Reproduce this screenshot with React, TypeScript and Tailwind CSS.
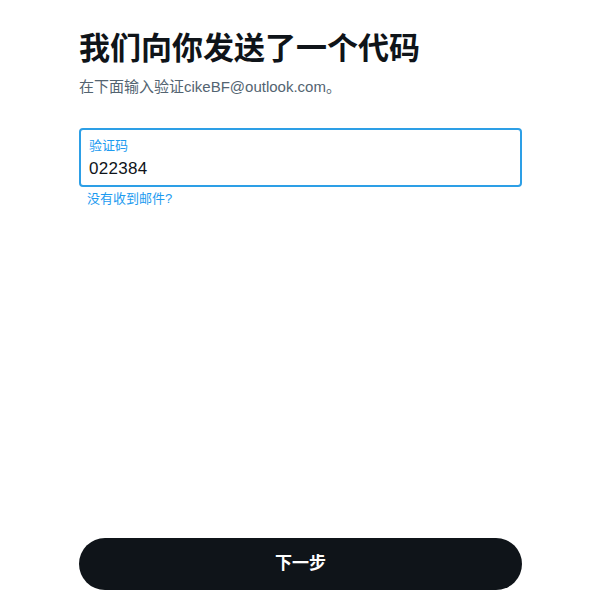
import React, { useState } from "react";

const font = {
  fontFamily:
    '"Liberation Sans", "Noto Sans CJK SC", sans-serif',
};

const App: React.FC = () => {
  const [code, setCode] = useState("022384");

  return (
    <div
      className="flex h-[609px] w-[600px] flex-col bg-white text-[#0f1419]"
      style={font}
    >
      <div className="mx-auto flex w-[444px] flex-1 flex-col pl-[1px]">
        <h1 className="mt-[30px] text-[31px] leading-[38px] font-bold">
          我们向你发送了一个代码
        </h1>
        <p className="mt-[9px] text-[15px] leading-[20px] text-[#536471]">
          在下面输入验证cikeBF@outlook.com。
        </p>

        <label className="mt-[31px] flex h-[59px] flex-col rounded-[4px] border-2 border-[#2d9fe6] px-[8px] pt-[8px]">
          <span className="text-[13px] leading-[16px] text-[#1d9bf0]">
            验证码
          </span>
          <input
            value={code}
            onChange={(e) => setCode(e.target.value)}
            className="mt-[3px] w-full bg-transparent text-[17px] tracking-[0.3px] leading-[24px] outline-none"
            style={font}
          />
        </label>
        <a className="mt-[4px] ml-[8px] cursor-pointer text-[13px] leading-[16px] text-[#1d9bf0]">
          没有收到邮件?
        </a>

        <div className="flex-1" />

        <button className="mb-[19px] flex h-[52px] w-full items-center justify-center rounded-full bg-[#0f1419] text-[17px] font-bold text-white">
          下一步
        </button>
      </div>
    </div>
  );
};

export default App;
